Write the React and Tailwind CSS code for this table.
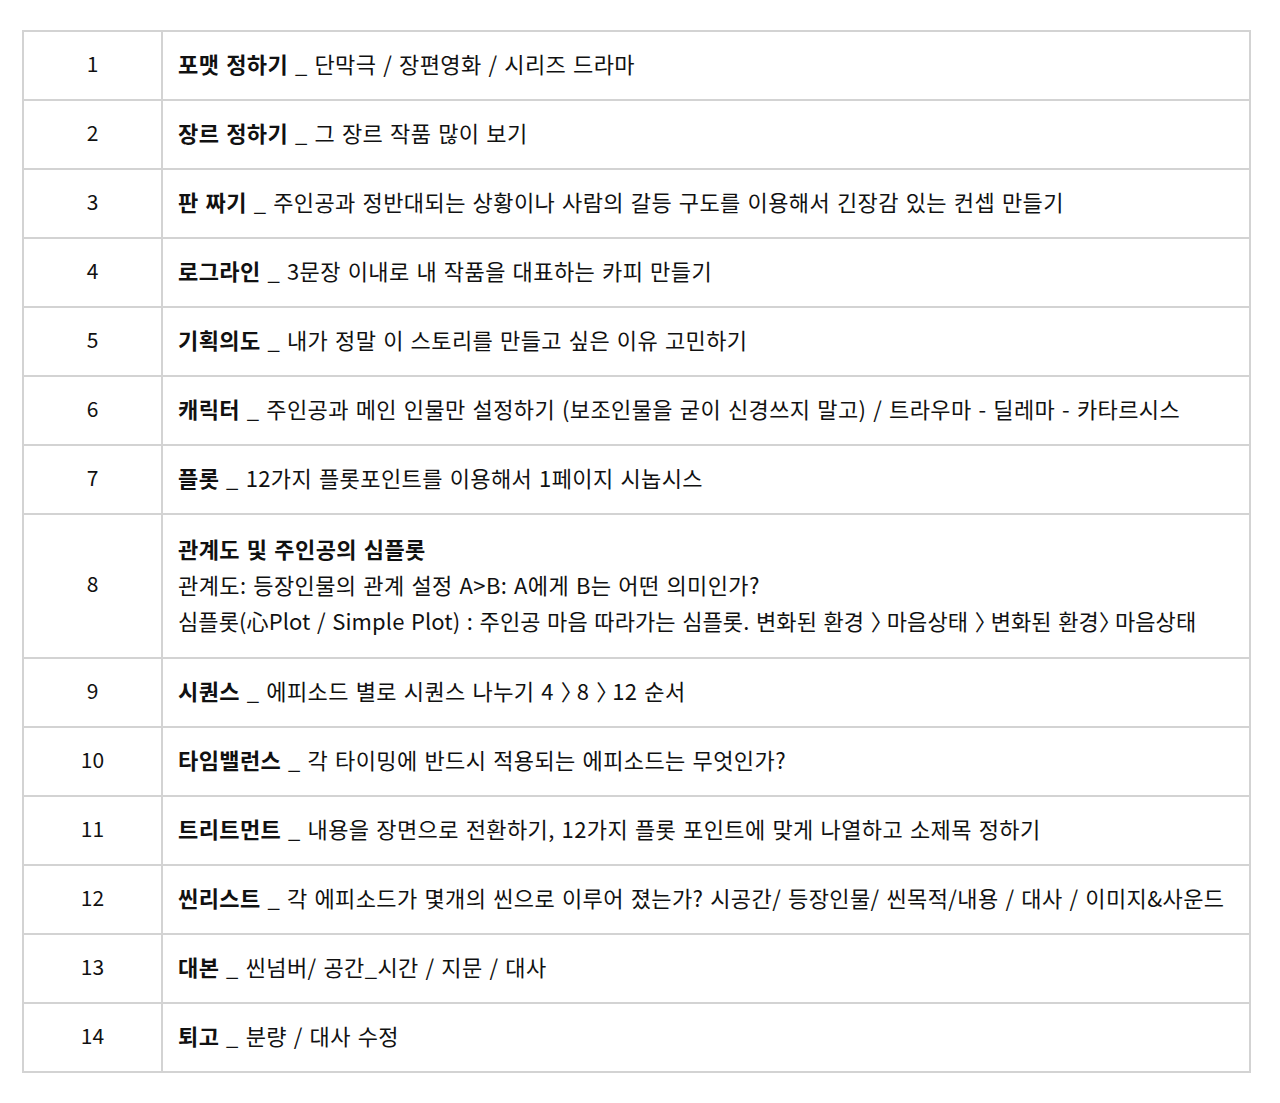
const rows = [
  { n: "1", b: "포맷 정하기", t: " _ 단막극 / 장편영화 / 시리즈 드라마" },
  { n: "2", b: "장르 정하기", t: " _ 그 장르 작품 많이 보기" },
  { n: "3", b: "판 짜기", t: " _ 주인공과 정반대되는 상황이나 사람의 갈등 구도를 이용해서 긴장감 있는 컨셉 만들기" },
  { n: "4", b: "로그라인", t: " _ 3문장 이내로 내 작품을 대표하는 카피 만들기" },
  { n: "5", b: "기획의도", t: " _ 내가 정말 이 스토리를 만들고 싶은 이유 고민하기" },
  { n: "6", b: "캐릭터", t: " _ 주인공과 메인 인물만 설정하기 (보조인물을 굳이 신경쓰지 말고) / 트라우마 - 딜레마 - 카타르시스" },
  { n: "7", b: "플롯", t: " _ 12가지 플롯포인트를 이용해서 1페이지 시놉시스" },
  { n: "8", b: "관계도 및 주인공의 심플롯", lines: [
    ["관계도:  등장인물의 관계 설정 A>B: A에게 B는 어떤 의미인가?"],
    ["심플롯(心Plot / Simple Plot) : 주인공 마음 따라가는 심플롯. 변화된 환경 ", " 마음상태 ", " 변화된 환경", " 마음상태"],
  ] },
  { n: "9", b: "시퀀스", parts: [" _ 에피소드 별로 시퀀스 나누기 4 ", " 8 ", " 12 순서"] },
  { n: "10", b: "타임밸런스", t: " _ 각 타이밍에 반드시 적용되는 에피소드는 무엇인가?" },
  { n: "11", b: "트리트먼트", t: " _ 내용을 장면으로 전환하기, 12가지 플롯 포인트에 맞게 나열하고 소제목 정하기" },
  { n: "12", b: "씬리스트", t: " _ 각 에피소드가 몇개의 씬으로 이루어 졌는가? 시공간/ 등장인물/ 씬목적/내용 / 대사 / 이미지&사운드" },
  { n: "13", b: "대본", t: " _ 씬넘버/ 공간_시간 / 지문 / 대사" },
  { n: "14", b: "퇴고", t: " _  분량 / 대사 수정" },
];

// narrow angle bracket between segments
function Joined({ parts }) {
  return parts.map((p, i) => (
    <span key={i}>
      {i > 0 && <span className="tracking-[-6px]">〉</span>}
      {i > 0 ? p.slice(1) : p}
    </span>
  ));
}

export default function App() {
  return (
    <div className="min-h-[1103px] bg-white pt-[30px] pl-[22px] font-['Noto_Sans_CJK_KR',sans-serif] text-[#111]">
      <table className="w-[1229px] border-collapse">
        <tbody>
          {rows.map((r) => (
            <tr key={r.n}>
              <td className="w-[139px] border-2 border-[#d3d3d3] pb-[4px] text-center align-middle text-[21px]">{r.n}</td>
              <td
                className={`border-2 border-[#d3d3d3] pb-[5px] pl-[15px] text-[22px] leading-[36px] tracking-[0.4px] [word-spacing:1.5px] ${
                  r.lines ? "h-[144px]" : "h-[69px]"
                }`}
              >
                {r.lines ? (
                  <div>
                    <div className="font-bold">{r.b}</div>
                    {r.lines.map((l, i) => (
                      <div key={i} className={i === 1 ? "tracking-[0.1px]" : ""}>
                        <Joined parts={l} />
                      </div>
                    ))}
                  </div>
                ) : (
                  <div>
                    <span className="font-bold">{r.b}</span>
                    {r.parts ? <Joined parts={r.parts} /> : r.t}
                  </div>
                )}
              </td>
            </tr>
          ))}
        </tbody>
      </table>
    </div>
  );
}
